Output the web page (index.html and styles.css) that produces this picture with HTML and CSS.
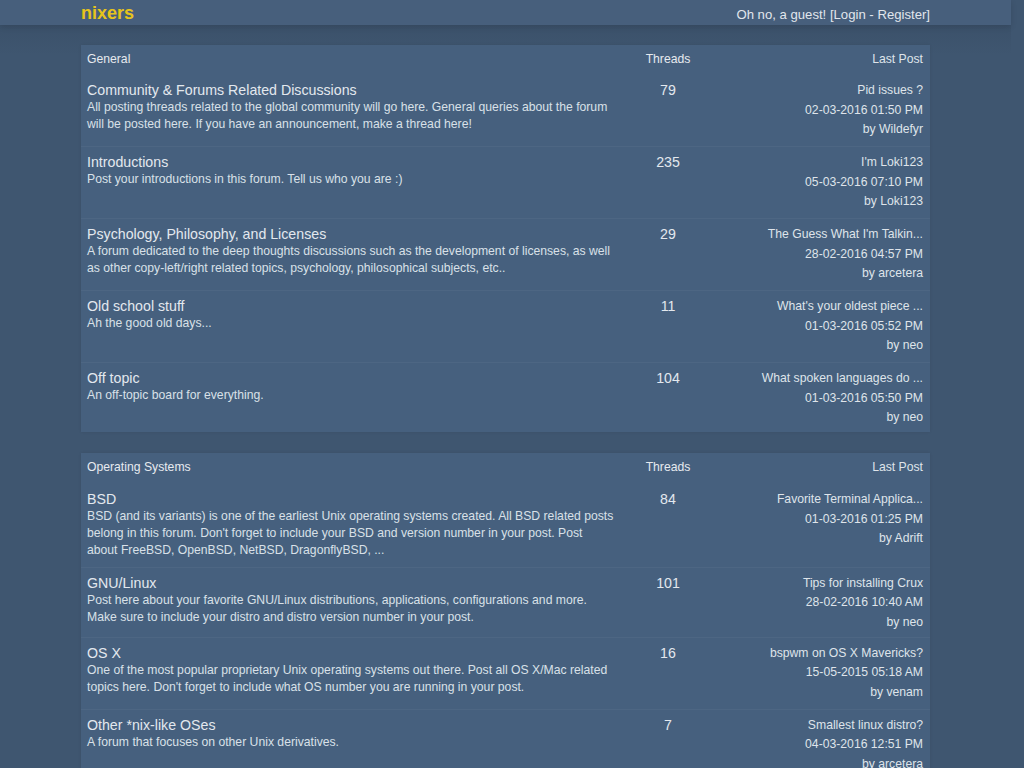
FILE: index.html
```html
<!DOCTYPE html>
<html lang="en">
<head>
<meta charset="utf-8">
<title>nixers</title>
<link rel="stylesheet" href="styles.css">
</head>
<body>
<div class="page">
  <header class="topbar">
    <div class="wrap topbar-inner">
      <a class="logo" href="#">nixers</a>
      <div class="guest">Oh no, a guest! [<a href="#">Login</a> - <a href="#">Register</a>]</div>
    </div>
  </header>

  <main class="wrap">
    <section class="board">
      <div class="row head">
        <div class="c-forum">General</div>
        <div class="c-threads">Threads</div>
        <div class="c-last">Last Post</div>
      </div>
      <div class="row">
        <div class="c-forum">
          <a class="title" href="#">Community &amp; Forums Related Discussions</a>
          <p class="desc">All posting threads related to the global community will go here. General queries about the forum will be posted here. If you have an announcement, make a thread here!</p>
        </div>
        <div class="c-threads num">79</div>
        <div class="c-last"><a href="#">Pid issues ?</a><span>02-03-2016 01:50 PM</span><span>by <a href="#">Wildefyr</a></span></div>
      </div>
      <div class="row">
        <div class="c-forum">
          <a class="title" href="#">Introductions</a>
          <p class="desc">Post your introductions in this forum. Tell us who you are :)</p>
        </div>
        <div class="c-threads num">235</div>
        <div class="c-last"><a href="#">I'm Loki123</a><span>05-03-2016 07:10 PM</span><span>by <a href="#">Loki123</a></span></div>
      </div>
      <div class="row">
        <div class="c-forum">
          <a class="title" href="#">Psychology, Philosophy, and Licenses</a>
          <p class="desc">A forum dedicated to the deep thoughts discussions such as the development of licenses, as well as other copy-left/right related topics, psychology, philosophical subjects, etc..</p>
        </div>
        <div class="c-threads num">29</div>
        <div class="c-last"><a href="#">The Guess What I'm Talkin...</a><span>28-02-2016 04:57 PM</span><span>by <a href="#">arcetera</a></span></div>
      </div>
      <div class="row">
        <div class="c-forum">
          <a class="title" href="#">Old school stuff</a>
          <p class="desc">Ah the good old days...</p>
        </div>
        <div class="c-threads num">11</div>
        <div class="c-last"><a href="#">What's your oldest piece ...</a><span>01-03-2016 05:52 PM</span><span>by <a href="#">neo</a></span></div>
      </div>
      <div class="row">
        <div class="c-forum">
          <a class="title" href="#">Off topic</a>
          <p class="desc">An off-topic board for everything.</p>
        </div>
        <div class="c-threads num">104</div>
        <div class="c-last"><a href="#">What spoken languages do ...</a><span>01-03-2016 05:50 PM</span><span>by <a href="#">neo</a></span></div>
      </div>
    </section>

    <section class="board">
      <div class="row head">
        <div class="c-forum">Operating Systems</div>
        <div class="c-threads">Threads</div>
        <div class="c-last">Last Post</div>
      </div>
      <div class="row tall">
        <div class="c-forum">
          <a class="title" href="#">BSD</a>
          <p class="desc">BSD (and its variants) is one of the earliest Unix operating systems created. All BSD related posts belong in this forum. Don't forget to include your BSD and version number in your post. Post about FreeBSD, OpenBSD, NetBSD, DragonflyBSD, ...</p>
        </div>
        <div class="c-threads num">84</div>
        <div class="c-last"><a href="#">Favorite Terminal Applica...</a><span>01-03-2016 01:25 PM</span><span>by <a href="#">Adrift</a></span></div>
      </div>
      <div class="row short">
        <div class="c-forum">
          <a class="title" href="#">GNU/Linux</a>
          <p class="desc">Post here about your favorite GNU/Linux distributions, applications, configurations and more. Make sure to include your distro and distro version number in your post.</p>
        </div>
        <div class="c-threads num">101</div>
        <div class="c-last"><a href="#">Tips for installing Crux</a><span>28-02-2016 10:40 AM</span><span>by <a href="#">neo</a></span></div>
      </div>
      <div class="row">
        <div class="c-forum">
          <a class="title" href="#">OS X</a>
          <p class="desc">One of the most popular proprietary Unix operating systems out there. Post all OS X/Mac related topics here. Don't forget to include what OS number you are running in your post.</p>
        </div>
        <div class="c-threads num">16</div>
        <div class="c-last"><a href="#">bspwm on OS X Mavericks?</a><span>15-05-2015 05:18 AM</span><span>by <a href="#">venam</a></span></div>
      </div>
      <div class="row">
        <div class="c-forum">
          <a class="title" href="#">Other *nix-like OSes</a>
          <p class="desc">A forum that focuses on other Unix derivatives.</p>
        </div>
        <div class="c-threads num">7</div>
        <div class="c-last"><a href="#">Smallest linux distro?</a><span>04-03-2016 12:51 PM</span><span>by <a href="#">arcetera</a></span></div>
      </div>
    </section>
  </main>
</div>
</body>
</html>
```

FILE: styles.css
```css
html {
  background: #3f5670;
}
body {
  margin: 0;
  font-family: "Liberation Sans", Arial, sans-serif;
  color: #dde3ea;
  background: #3f5670;
}
a {
  color: inherit;
  text-decoration: none;
}
.page {
  width: 1011px;
  padding-bottom: 40px;
  background: linear-gradient(#3b516a 25px, #3f5670 55px);
}
.wrap {
  width: 849px;
  margin: 0 auto;
}
.topbar {
  background: #475f7c;
  height: 25px;
  box-shadow: 0 2px 6px rgba(0, 0, 0, 0.12);
}
.topbar-inner {
  display: flex;
  justify-content: space-between;
  align-items: center;
  height: 25px;
}
.logo {
  font-size: 18px;
  font-weight: bold;
  color: #e6c41b;
  line-height: 25px;
  padding-top: 1px;
}
.guest {
  font-size: 13.15px;
  color: #e1e6ec;
  line-height: 25px;
  margin-top: 4px;
}
main.wrap {
  padding-top: 20px;
  display: flex;
  flex-direction: column;
  gap: 21px;
}
.board {
  background: #46607e;
  box-shadow: 0 0 3px rgba(0, 0, 0, 0.08);
}
.row {
  display: grid;
  grid-template-columns: 539px 84px 1fr;
  padding: 6px 7px 6.5px 6px;
  border-top: 1px solid rgba(255, 255, 255, 0.045);
}
.row:last-child {
  padding-bottom: 4.5px;
}
.row.short {
  padding-bottom: 4.5px;
}
.row.head {
  border-top: 0;
  font-size: 12.2px;
  line-height: 15px;
  padding-top: 7px;
  padding-bottom: 8px;
  color: #e6eaef;
}
.row.head + .row {
  border-top: 0;
  padding-top: 7px;
}
.board:first-child .row.head + .row {
  padding-top: 6px;
}
.row.tall {
  padding-bottom: 7.5px;
}
.c-forum {
  padding-right: 11px;
}
.c-threads {
  text-align: center;
}
.c-last {
  text-align: right;
  font-size: 12.2px;
  line-height: 19.5px;
  display: flex;
  flex-direction: column;
  color: #dfe4ea;
}
.row.head .c-last {
  display: block;
  line-height: 15px;
}
.title {
  display: block;
  font-size: 14.2px;
  line-height: 18px;
  color: #e3e8ee;
}
.desc {
  margin: 0;
  font-size: 12.2px;
  line-height: 17px;
  color: #d9e0e8;
}
.num {
  font-size: 14.2px;
  line-height: 19px;
  color: #e3e8ee;
}
```
